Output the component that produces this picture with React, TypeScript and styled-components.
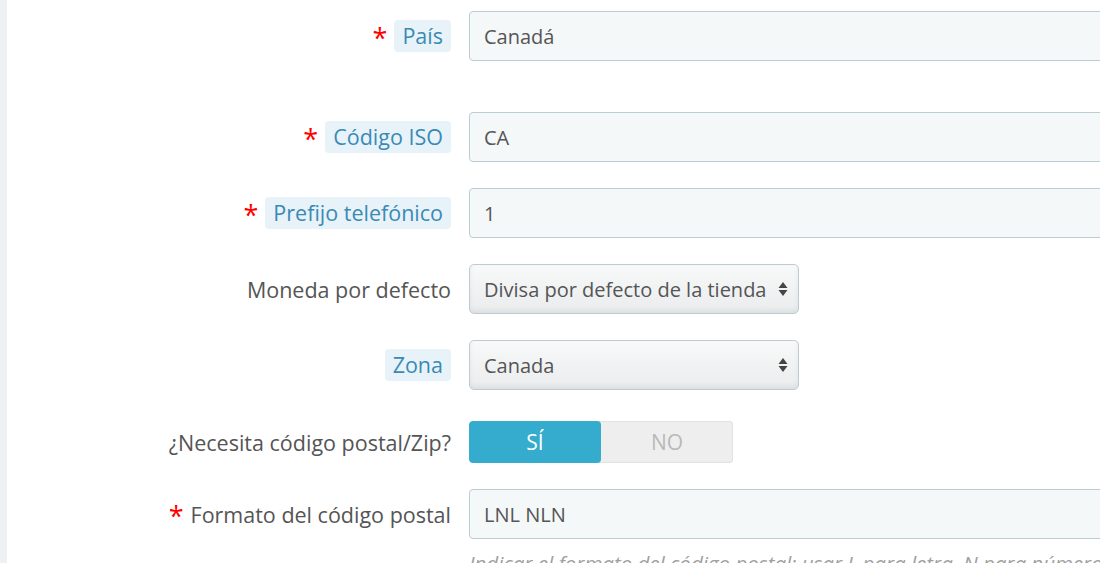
import React from "react";
import styled, { createGlobalStyle } from "styled-components";

const GlobalStyle = createGlobalStyle`
  html, body {
    margin: 0;
    padding: 0;
    background: #fff;
    overflow: hidden;
  }
  body {
    font-family: "Open Sans", "Liberation Sans", sans-serif;
  }
`;

/** page shell with the grey strip on the left */
const Page = styled.div`
  width: 1100px;
  height: 563px;
  box-sizing: border-box;
  border-left: 7px solid #eef0f2;
  overflow: hidden;
`;

const Form = styled.form`
  display: flex;
  flex-direction: column;
  gap: 26px;
  padding-top: 11px;
`;

const Row = styled.div<{ $extra?: number; $pad?: number }>`
  display: grid;
  grid-template-columns: 444px 700px;
  column-gap: 18px;
  align-items: start;
  padding-top: ${(p) => p.$pad ?? 0}px;
  margin-bottom: ${(p) => p.$extra ?? 0}px;
`;

const LabelCell = styled.label<{ $h?: number }>`
  display: flex;
  justify-content: flex-end;
  align-items: center;
  gap: 7px;
  height: ${(p) => p.$h ?? 50}px;
  font-size: 21.5px;
  color: #555;
  white-space: nowrap;
`;

const Required = styled.span`
  color: #f00;
  font-size: 27px;
  line-height: 1;
  margin-top: 2px;
`;

const Hint = styled.span`
  display: inline-block;
  padding: 1px 8px 2px;
  border-radius: 4px;
  background: #e7f3f9;
  color: #3a8ab4;
`;

const Control = styled.div`
  display: flex;
  flex-direction: column;
`;

const TextInput = styled.input`
  box-sizing: border-box;
  width: 700px;
  height: 50px;
  padding: 0 14px;
  border: 1px solid #bbcdd2;
  border-radius: 4px;
  background: #f5f8f9;
  font-family: "Open Sans", "Liberation Sans", sans-serif;
  font-size: 20px;
  color: #555;
  outline: none;
`;

const SelectWrap = styled.div`
  position: relative;
  width: 330px;
  height: 50px;
`;

const Select = styled.select`
  appearance: none;
  -webkit-appearance: none;
  box-sizing: border-box;
  width: 100%;
  height: 100%;
  padding: 0 30px 0 14px;
  border: 1px solid #bbcdd2;
  border-radius: 5px;
  background: linear-gradient(#f8f9f9, #eaeced);
  box-shadow: inset 0 -3px 5px rgba(0, 0, 0, 0.06);
  font-family: "Open Sans", "Liberation Sans", sans-serif;
  font-size: 20px;
  color: #555;
  outline: none;
`;

const Arrows = styled.svg`
  position: absolute;
  right: 11px;
  top: 50%;
  width: 10px;
  height: 16px;
  margin-top: -8px;
  pointer-events: none;
`;

const Switch = styled.div`
  display: flex;
  width: 264px;
  height: 42px;
  border-radius: 4px;
  background: #eeeeee;
  box-shadow: inset 0 0 0 1px #e2e2e2;
  overflow: hidden;
`;

const SwitchOption = styled.span<{ $on?: boolean }>`
  flex: 1;
  display: flex;
  align-items: center;
  justify-content: center;
  font-size: 21px;
  color: ${(p) => (p.$on ? "#fff" : "#b9b9b9")};
  background: ${(p) => (p.$on ? "#35abce" : "transparent")};
  border-radius: 4px;
`;

const HelpText = styled.p`
  margin: 10px 0 0;
  font-size: 20.5px;
  font-style: italic;
  color: #a0a0a0;
  white-space: nowrap;
`;

const SelectArrows = () => (
  <Arrows viewBox="0 0 10 16">
    <path d="M5 1 L9.5 7 L0.5 7 Z" fill="#444" />
    <path d="M5 15 L9.5 9 L0.5 9 Z" fill="#444" />
  </Arrows>
);

export default function App() {
  return (
    <>
      <GlobalStyle />
      <Page>
        <Form>
          <Row $extra={25}>
            <LabelCell>
              <Required>*</Required>
              <Hint>País</Hint>
            </LabelCell>
            <Control>
              <TextInput readOnly defaultValue="Canadá" />
            </Control>
          </Row>

          <Row>
            <LabelCell>
              <Required>*</Required>
              <Hint>Código ISO</Hint>
            </LabelCell>
            <Control>
              <TextInput readOnly defaultValue="CA" />
            </Control>
          </Row>

          <Row>
            <LabelCell>
              <Required>*</Required>
              <Hint>Prefijo telefónico</Hint>
            </LabelCell>
            <Control>
              <TextInput readOnly defaultValue="1" />
            </Control>
          </Row>

          <Row>
            <LabelCell>Moneda por defecto</LabelCell>
            <Control>
              <SelectWrap>
                <Select defaultValue="shop">
                  <option value="shop">Divisa por defecto de la tienda</option>
                </Select>
                <SelectArrows />
              </SelectWrap>
            </Control>
          </Row>

          <Row>
            <LabelCell>
              <Hint>Zona</Hint>
            </LabelCell>
            <Control>
              <SelectWrap>
                <Select defaultValue="ca">
                  <option value="ca">Canada</option>
                </Select>
                <SelectArrows />
              </SelectWrap>
            </Control>
          </Row>

          <Row $pad={5}>
            <LabelCell $h={42}>¿Necesita código postal/Zip?</LabelCell>
            <Control>
              <Switch>
                <SwitchOption $on>SÍ</SwitchOption>
                <SwitchOption>NO</SwitchOption>
              </Switch>
            </Control>
          </Row>

          <Row>
            <LabelCell>
              <Required>*</Required>
              Formato del código postal
            </LabelCell>
            <Control>
              <TextInput readOnly defaultValue="LNL NLN" />
              <HelpText>
                Indicar el formato del código postal: usar L para letra, N para número y C para el código ISO del país.
              </HelpText>
            </Control>
          </Row>
        </Form>
      </Page>
    </>
  );
}
